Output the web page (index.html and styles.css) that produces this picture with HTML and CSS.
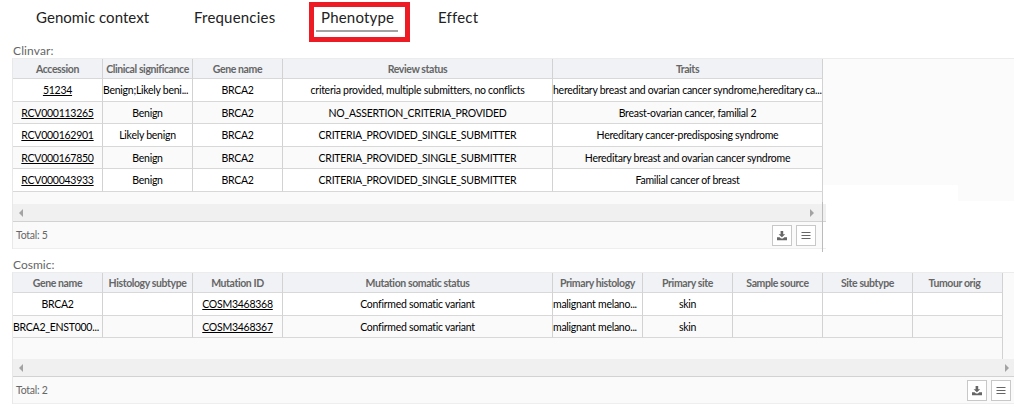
FILE: index.html
```html
<!DOCTYPE html>
<html lang="en">
<head>
<meta charset="utf-8">
<title>Variant phenotype</title>
<link rel="stylesheet" href="styles.css">
</head>
<body>
<svg class="defs" width="0" height="0">
  <symbol id="download" viewBox="0 0 10 10"><path d="M3.6 0h2.6v3.2h2L4.9 6.2 1.6 3.2h2zM0 6.2h2.6l1.4 1.4h1.9l1.4-1.4H10v3.1H0z"/></symbol>
  <symbol id="menu" viewBox="0 0 10 10"><path d="M.5 1h9v1h-9zM.5 4h9v1h-9zM.5 7h9v1h-9z"/></symbol>
</svg>
<nav class="tabs">
  <a class="tab t1">Genomic context</a>
  <a class="tab t2">Frequencies</a>
  <a class="tab active"><span>Phenotype</span></a>
  <a class="tab">Effect</a>
</nav>
<section class="block clinvar">
  <h2 class="title">Clinvar:</h2>
  <div class="area">
    <div class="grid">
      <div class="row head"><div>Accession</div><div>Clinical significance</div><div>Gene name</div><div>Review status</div><div>Traits</div></div>
      <div class="row tall"><div><a>51234</a></div><div class="clip">Benign;Likely beni...</div><div>BRCA2</div><div>criteria provided, multiple submitters, no conflicts</div><div class="clip">hereditary breast and ovarian cancer syndrome,hereditary ca...</div></div>
      <div class="row odd"><div><a>RCV000113265</a></div><div>Benign</div><div>BRCA2</div><div>NO_ASSERTION_CRITERIA_PROVIDED</div><div>Breast-ovarian cancer, familial 2</div></div>
      <div class="row tall"><div><a>RCV000162901</a></div><div>Likely benign</div><div>BRCA2</div><div>CRITERIA_PROVIDED_SINGLE_SUBMITTER</div><div>Hereditary cancer-predisposing syndrome</div></div>
      <div class="row odd"><div><a>RCV000167850</a></div><div>Benign</div><div>BRCA2</div><div>CRITERIA_PROVIDED_SINGLE_SUBMITTER</div><div>Hereditary breast and ovarian cancer syndrome</div></div>
      <div class="row tall"><div><a>RCV000043933</a></div><div>Benign</div><div>BRCA2</div><div>CRITERIA_PROVIDED_SINGLE_SUBMITTER</div><div>Familial cancer of breast</div></div>
      <div class="empty"></div>
      <div class="scroll"><i class="prev"></i><i class="next"></i></div>
      <div class="foot"><span>Total: 5</span><b class="btn"><svg><use href="#download"/></svg></b><b class="btn"><svg><use href="#menu"/></svg></b></div>
      <div class="edge"></div>
    </div>
    <div class="rest"></div>
    <div class="rest last"></div>
  </div>
</section>
<section class="block cosmic">
  <h2 class="title">Cosmic:</h2>
  <div class="grid">
    <div class="row head"><div>Gene name</div><div>Histology subtype</div><div>Mutation ID</div><div>Mutation somatic status</div><div>Primary histology</div><div>Primary site</div><div>Sample source</div><div>Site subtype</div><div class="orig">Tumour orig</div></div>
    <div class="row tall"><div>BRCA2</div><div></div><div><a>COSM3468368</a></div><div>Confirmed somatic variant</div><div class="clip">malignant melano...</div><div>skin</div><div></div><div></div><div></div></div>
    <div class="row odd"><div class="clip">BRCA2_ENST000...</div><div></div><div><a>COSM3468367</a></div><div>Confirmed somatic variant</div><div class="clip">malignant melano...</div><div>skin</div><div></div><div></div><div></div></div>
    <div class="empty"></div>
    <div class="scroll"><i class="prev"></i><i class="next"></i></div>
    <div class="foot"><span>Total: 2</span><b class="btn"><svg><use href="#download"/></svg></b><b class="btn"><svg><use href="#menu"/></svg></b></div>
  </div>
</section>
</body>
</html>
```
FILE: styles.css
```css
* { box-sizing: border-box; }
body { margin: 0; width: 1014px; height: 412px; overflow: hidden; background: #fff; font-family: Lato, "Open Sans", sans-serif; color: #000; }
.defs { position: absolute; }
.tabs { display: flex; height: 43px; padding: 2px 0 0 36px; font-size: 15px; line-height: 31px; color: #222; letter-spacing: .2px; }
.tab { white-space: nowrap; }
.t1 { width: 158px; letter-spacing: .05px; }
.t2 { width: 115px; }
.active { width: 101px; height: 40px; border: 5px solid #ed1c24; margin-right: 28px; padding: 0 7px 0 2px; line-height: 21px; }
.active span { display: block; height: 25px; padding: 0 5px; margin-top: 0; border-bottom: 2px solid #a3a3a3; }
.block { padding-left: 12px; }
.title { margin: 0; height: 15px; padding-left: 1px; font-size: 12px; line-height: 16px; font-weight: 400; color: #666; }
.clinvar .title { letter-spacing: .12px; }
.area { display: flex; height: 201px; }
.grid { border-left: 1px solid #e8e8e8; border-top: 1px solid #ececec; background: #fafafa; position: relative; }
.clinvar .grid { width: 811px; height: 191px; }
.row { display: grid; height: 22px; background: #fff; font-size: 10.5px; letter-spacing: -.26px; line-height: 21px; text-align: center; }
.clinvar .row { width: 810px; grid-template-columns: 90px 90px 90px 270px 270px; }
.cosmic .row { width: 990px; grid-template-columns: 90px 90px 90px 270px 90px 90px 90px 90px 90px; }
.row > div { border-right: 1px solid #d2d2d2; border-bottom: 1px solid #d8d8d8; white-space: nowrap; overflow: hidden; }
.row.tall { height: 23px; line-height: 23px; }
.row.odd { background: #fafafa; line-height: 22px; }
.row.head { height: 20px; line-height: 21px; background: #f0f2f5; color: #666; font-weight: 700; letter-spacing: -.4px; }
.row .clip { text-align: left; }
.row a { text-decoration: underline; }
.row .orig { padding-right: 6px; }
.empty { width: 810px; height: 12px; border-right: 1px solid #d2d2d2; }
.scroll { height: 18px; display: flex; justify-content: space-between; padding: 5px 9px 0 6px; background: #f0f0f0; border-bottom: 1px solid #d2d2d2; }
.prev, .next { width: 0; height: 0; border: 4px solid transparent; }
.prev { border-right-color: #a3a3a3; border-left: 0; }
.next { border-left-color: #a3a3a3; border-right: 0; }
.foot { display: flex; align-items: flex-start; height: 27px; border-bottom: 1px solid #eee; font-size: 10.5px; letter-spacing: -.26px; line-height: 27px; color: #666; padding: 0 7px 0 3px; }
.foot span { flex: 1; }
.btn { width: 20px; height: 21px; margin: 3px 0 0 4px; border: 1px solid #c8c8c8; background: #fff; padding: 5px 4px; line-height: 0; }
.btn svg { width: 10px; height: 10px; fill: #666; display: block; }
.edge { position: absolute; left: 809px; top: 143px; width: 1px; height: 50px; background: #bbb; }
.rest { width: 135px; height: 127px; background: #fbfbfb; border-top: 1px solid #ececec; }
.rest.last { width: 56px; height: 143px; }
.clinvar .scroll, .clinvar .foot { width: 813px; }
.clinvar .scroll { padding-right: 12px; }
.clinvar .foot { padding-right: 10px; }
.cosmic { margin-top: -2px; }
.cosmic .empty { width: 990px; height: 21px; }
.cosmic .scroll { padding-right: 5px; }
.cosmic .foot { padding-right: 3px; }
```
